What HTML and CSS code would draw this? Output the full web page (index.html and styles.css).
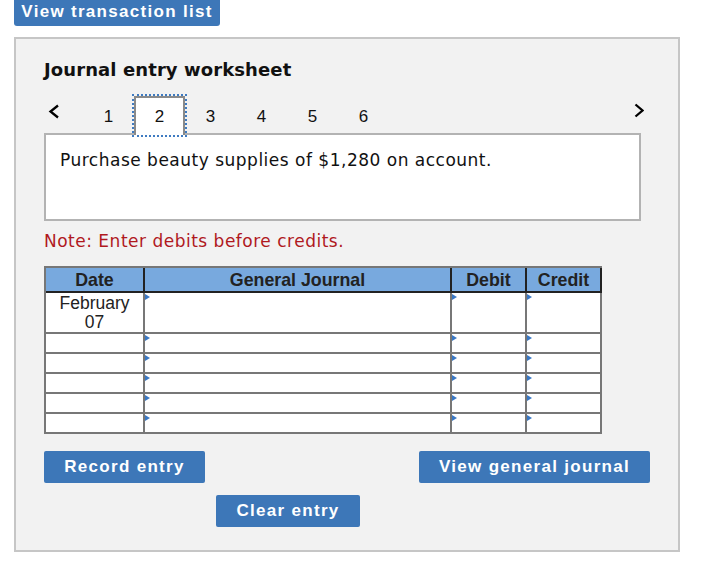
FILE: index.html
```html
<!DOCTYPE html>
<html lang="en">
<head>
<meta charset="utf-8">
<title>Journal entry worksheet</title>
<link rel="stylesheet" href="styles.css">
</head>
<body>
<button class="btn btn-top">View transaction list</button>
<section class="panel">
  <h2 class="title">Journal entry worksheet</h2>
  <nav class="steps">
    <svg class="chev chev-left" width="12" height="15" viewBox="0 0 12 15"><polyline points="10,1.5 2.5,7.5 10,13.5" fill="none" stroke="#000" stroke-width="2.3"/></svg>
    <span class="tab">1</span>
    <span class="tab active">2</span>
    <span class="tab">3</span>
    <span class="tab">4</span>
    <span class="tab">5</span>
    <span class="tab">6</span>
    <span class="spacer"></span>
    <svg class="chev chev-right" width="10" height="15" viewBox="0 0 10 15"><polyline points="1.5,1.5 8.5,7.5 1.5,13.5" fill="none" stroke="#000" stroke-width="2.3"/></svg>
  </nav>
  <div class="desc">Purchase beauty supplies of $1,280 on account.</div>
  <p class="note">Note: Enter debits before credits.</p>
  <div class="journal">
    <div class="hd">Date</div>
    <div class="hd">General Journal</div>
    <div class="hd">Debit</div>
    <div class="hd">Credit</div>

    <div class="cell date">February<br>07</div>
    <div class="cell tri"></div>
    <div class="cell tri"></div>
    <div class="cell tri"></div>

    <div class="cell"></div><div class="cell tri"></div><div class="cell tri"></div><div class="cell tri"></div>
    <div class="cell"></div><div class="cell tri"></div><div class="cell tri"></div><div class="cell tri"></div>
    <div class="cell"></div><div class="cell tri"></div><div class="cell tri"></div><div class="cell tri"></div>
    <div class="cell"></div><div class="cell tri"></div><div class="cell tri"></div><div class="cell tri"></div>
    <div class="cell"></div><div class="cell tri"></div><div class="cell tri"></div><div class="cell tri"></div>
  </div>
  <div class="actions">
    <button class="btn btn-record">Record entry</button>
    <button class="btn btn-view">View general journal</button>
  </div>
  <div class="actions2">
    <button class="btn btn-clear">Clear entry</button>
  </div>
</section>
</body>
</html>
```

FILE: styles.css
```css
* { box-sizing: border-box; }
html, body { margin: 0; padding: 0; background: #fff; }
body { font-family: "Liberation Sans", Arial, sans-serif; color: #222; }

.btn {
  display: block;
  border: 0;
  margin: 0;
  background: #3d77b8;
  color: #fff;
  font-family: "Liberation Sans", Arial, sans-serif;
  font-weight: bold;
  font-size: 17px;
  letter-spacing: 1.3px;
  border-radius: 2px;
  height: 32px;
  line-height: 32px;
  padding: 0;
  text-align: center;
  cursor: pointer;
}
.btn-top {
  margin-left: 14px;
  width: 206px;
  height: 26px;
  line-height: 24px;
  padding-bottom: 2px;
  border-radius: 0 0 3px 3px;
}

.panel {
  margin: 11px 0 0 14px;
  width: 666px;
  border: 2px solid #c6c6c6;
  background: #f2f2f2;
  padding: 20px 37px 23px 28px;
}

.title {
  margin: 0;
  font-family: "DejaVu Sans", Verdana, sans-serif;
  font-weight: bold;
  font-size: 18px;
  line-height: 22px;
  color: #111;
  letter-spacing: 0.1px;
}

.steps {
  display: flex;
  align-items: flex-start;
  height: 39px;
  margin-top: 15px;
}
.chev-left { margin: 8px 23px 0 4px; flex: none; }
.chev-right { margin: 7px -3px 0 0; flex: none; }
.spacer { flex: 1; }
.tab {
  flex: none;
  width: 51px;
  height: 39px;
  text-align: center;
  font-size: 17px;
  line-height: 19px;
  padding-top: 9px;
  border: 2px solid transparent;
  border-bottom: 0;
  color: #111;
}
.tab.active {
  position: relative;
  z-index: 1;
  background: #fff;
  border-color: #8a8a8a;
  outline: 2px dotted #3f7bc1;
}

.desc {
  margin-top: -2px;
  height: 88px;
  border: 2px solid #b3b3b3;
  background: #fff;
  padding: 15px 14px 0;
  font-family: "DejaVu Sans", Verdana, sans-serif;
  font-size: 17px;
  letter-spacing: 0.5px;
  line-height: 20px;
  color: #111;
}

.note {
  margin: 10px 0 0;
  font-family: "DejaVu Sans", Verdana, sans-serif;
  font-size: 17px;
  letter-spacing: 0.5px;
  line-height: 20px;
  color: #b0191e;
}

.journal {
  margin-top: 15px;
  width: 558px;
  display: grid;
  grid-template-columns: 99px 307px 75px 75px;
  grid-template-rows: 25px 41px 20px 20px 20px 20px 20px;
  border-left: 2px solid #777;
  border-top: 2px solid #777;
  background: #fff;
}
.hd {
  background: #78a9de;
  border-right: 2px solid #222;
  border-bottom: 2px solid #222;
  font-weight: bold;
  font-size: 17.8px;
  line-height: 20px;
  padding-top: 2px;
  text-align: center;
  color: #222;
}
.cell {
  position: relative;
  border-right: 2px solid #777;
  border-bottom: 2px solid #777;
}
.cell.date {
  text-align: center;
  font-size: 17.5px;
  line-height: 19px;
  padding-top: 1px;
  color: #222;
}
.tri::before {
  content: "";
  position: absolute;
  left: 0;
  top: 1px;
  border-left: 5px solid #3a78c4;
  border-top: 3.5px solid transparent;
  border-bottom: 3.5px solid transparent;
}

.actions {
  display: flex;
  justify-content: space-between;
  margin-top: 17px;
  margin-right: -9px;
}
.btn-record { width: 161px; }
.btn-view { width: 231px; }
.actions2 { margin-top: 12px; padding-left: 172px; }
.btn-clear { width: 144px; }
```
